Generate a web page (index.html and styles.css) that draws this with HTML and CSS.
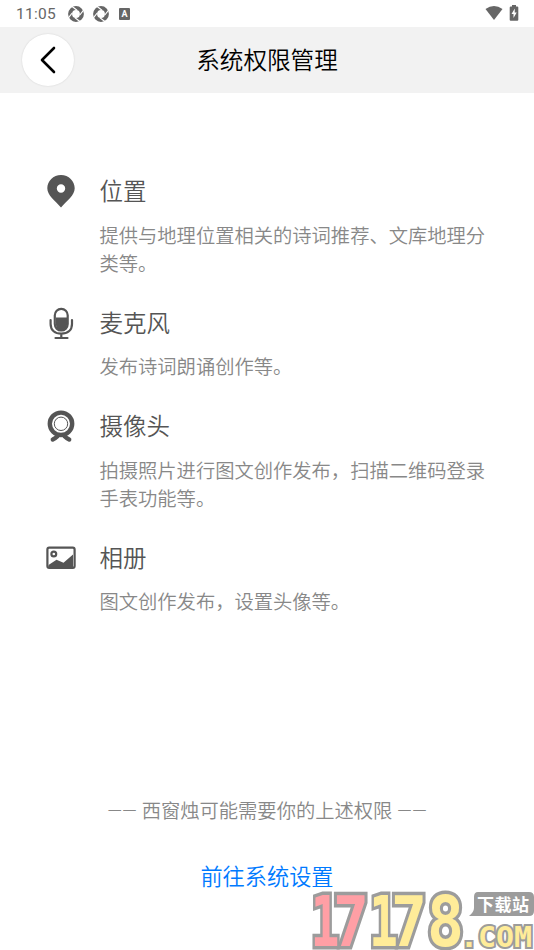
FILE: index.html
```html
<!DOCTYPE html>
<html lang="zh-CN">
<head>
<meta charset="utf-8">
<title>系统权限管理</title>
<link rel="stylesheet" href="styles.css">
</head>
<body>
<div class="screen">
  <div class="status">
    <span class="time">11:05</span>
    <svg class="swirl" viewBox="0 0 16 16"><circle cx="8" cy="8" r="5.9"/><path d="M3.500 0L9 4.200M16 3.500L11.800 9M12.500 16L7 11.800M0 12.500L4.200 7"/></svg>
    <svg class="swirl" viewBox="0 0 16 16"><circle cx="8" cy="8" r="5.9"/><path d="M3.500 0L9 4.200M16 3.500L11.800 9M12.500 16L7 11.800M0 12.500L4.200 7"/></svg>
    <span class="badge-a">A</span>
    <svg class="wifi" viewBox="0 0 18 14"><path d="M0.5 3Q9-3 17.5 3L9 14Z"/></svg>
    <svg class="battery" viewBox="0 0 10 16"><path d="M3 0h4v1.6h1.3q1 0 1 1v12.2q0 1-1 1H1.7q-1 0-1-1V2.600q0-1 1-1H3z"/><path class="bolt" d="M5.800 3.500L2.500 9h2v4L7.700 7.500h-2z"/></svg>
  </div>
  <header class="header">
    <button class="back" aria-label="返回"><svg viewBox="0 0 16 28"><path d="M14 2L2 14L14 26"/></svg></button>
    <h1 class="title">系统权限管理</h1>
  </header>
  <main class="list">
    <section class="item">
      <svg class="icon" viewBox="0 0 30 34"><path class="fill" fill-rule="evenodd" d="M15 0C7.300 0 1.300 6 1.300 13.300C1.300 20.500 9 25.500 15 32.500C21 25.500 28.700 20.500 28.700 13.300C28.700 6 22.700 0 15 0ZM15 9.300a4.200 4.200 0 1 1 0 8.400a4.200 4.200 0 1 1 0-8.400Z"/></svg>
      <div class="body"><h2>位置</h2><p>提供与地理位置相关的诗词推荐、文库地理分类等。</p></div>
    </section>
    <section class="item">
      <svg class="icon" viewBox="0 0 30 34"><path class="fill" d="M10 10.500h11v7.500a5.500 5.500 0 0 1-11 0z"/><rect class="line" x="8.800" y="1.900" width="12.900" height="21.600" rx="6.400"/><path class="line" d="M4.600 13v4c0 6.300 4.500 9.700 10.700 9.700s10.700-3.400 10.700-9.700v-4M15.300 27v4M9.500 31h12"/></svg>
      <div class="body"><h2>麦克风</h2><p>发布诗词朗诵创作等。</p></div>
    </section>
    <section class="item">
      <svg class="icon" viewBox="0 0 30 34"><circle class="ring" cx="15" cy="13.800" r="11.200"/><circle class="thin" cx="15" cy="13.800" r="6.700"/><path class="feet" d="M11.500 26.300Q9.500 28.300 6.800 29.500M18.500 26.300Q20.500 28.300 23.200 29.500"/></svg>
      <div class="body"><h2>摄像头</h2><p>拍摄照片进行图文创作发布，扫描二维码登录手表功能等。</p></div>
    </section>
    <section class="item">
      <svg class="icon" viewBox="0 0 30 34"><rect class="line" x="1.400" y="5.600" width="27.200" height="20.300" rx="1.800"/><circle class="line" cx="7.800" cy="12" r="2.400"/><path class="fill" d="M2.500 25V23L10.500 17.800L17.500 20.800L27 12.500V25Z"/></svg>
      <div class="body"><h2>相册</h2><p>图文创作发布，设置头像等。</p></div>
    </section>
  </main>
  <footer class="footer">
    <p class="note">—— 西窗烛可能需要你的上述权限 ——</p>
    <a class="link">前往系统设置</a>
  </footer>
  <svg class="mark" viewBox="0 0 234 70">
    <g class="digits">
      <text class="red" x="10.500" y="65.500" textLength="29" lengthAdjust="spacingAndGlyphs">1</text>
      <text class="red" x="33" y="65.500" textLength="36" lengthAdjust="spacingAndGlyphs">7</text>
      <text class="yellow" x="69" y="65.500" textLength="29" lengthAdjust="spacingAndGlyphs">1</text>
      <text class="yellow" x="91" y="65.500" textLength="36" lengthAdjust="spacingAndGlyphs">7</text>
      <text class="yellow" x="127" y="65.500" textLength="37" lengthAdjust="spacingAndGlyphs">8</text>
    </g>
    <path class="bubble" d="M178 12h51q5 0 5 5v14q0 5-5 5h-60q5-4 5-8V17q0-5 4-5z"/>
    <text class="site" x="177" y="30.500" textLength="52">下载站</text>
    <text class="com" x="160" y="67" textLength="72" lengthAdjust="spacingAndGlyphs">.COM</text>
  </svg>
</div>
</body>
</html>
```

FILE: styles.css
```css
* { box-sizing: border-box; margin: 0; padding: 0; }
body { background: #fff; font-family: Roboto, "Noto Sans CJK SC", sans-serif; overflow: hidden; }
.screen { position: relative; width: 534px; height: 950px; display: flex; flex-direction: column; overflow: hidden; }
.status { height: 27px; flex: none; display: flex; align-items: center; padding: 0 15px 0 16px; color: #666; }
.time { width: 52px; font-size: 15.500px; letter-spacing: .3px; padding-top: 1px; }
.swirl { width: 16px; height: 16px; margin-right: 9px; }
.swirl circle { fill: none; stroke: #666; stroke-width: 4; }
.swirl path { stroke: #fff; stroke-width: 1.200; fill: none; }
.badge-a { width: 11px; height: 12px; margin-left: 1px; border-radius: 1px; background: #666; color: #fff; font-size: 9px; font-weight: 700; line-height: 12px; text-align: center; }
.wifi { width: 18px; height: 14px; margin: -2px 6px 0 auto; fill: #666; }
.battery { width: 10px; height: 16px; margin-top: -2px; fill: #666; }
.battery .bolt { fill: #fff; }
.header { height: 66px; flex: none; display: grid; grid-template-columns: 76px 1fr 76px; align-items: center; background: #f2f2f2; }
.back { width: 52px; height: 52px; margin-left: 22px; border: 0; border-radius: 50%; background: #fff; box-shadow: 0 0 2px rgba(0,0,0,.14); display: flex; align-items: center; justify-content: center; }
.back svg { width: 16px; height: 28px; fill: none; stroke: #000; stroke-width: 2.600; stroke-linecap: round; stroke-linejoin: round; }
.title { padding-top: 2px; text-align: center; font-size: 23.600px; line-height: 34px; color: #000; }
.list { padding: 82px 47px 0 46px; display: flex; flex-direction: column; gap: 27.900px; }
.item { display: flex; gap: 23.500px; }
.icon { width: 30px; height: 34px; flex: none; }
.fill { fill: #555; }
.line { fill: none; stroke: #555; stroke-width: 2.200; stroke-linecap: round; }
.ring { fill: none; stroke: #555; stroke-width: 4.400; }
.thin { fill: none; stroke: #555; stroke-width: 1; }
.feet { fill: none; stroke: #555; stroke-width: 4.400; stroke-linecap: round; }
.body { width: 388px; }
.body h2 { font-size: 23.500px; line-height: 35px; color: #555; }
.body p { margin-top: 12.500px; font-size: 19.300px; line-height: 28.100px; color: #888; }
.footer { margin-top: 180.500px; display: flex; flex-direction: column; align-items: center; }
.note { font-size: 19.300px; line-height: 28px; color: #888; white-space: nowrap; }
.link { margin-top: 35px; font-size: 22.200px; line-height: 32px; color: #007aff; }
.title, .body h2, .body p, .note, .link { font-weight: 350; }
.mark { position: absolute; left: 300px; top: 880px; width: 234px; height: 70px; }
.mark text { font-family: "DejaVu Sans Mono", monospace; font-weight: 700; paint-order: stroke; stroke: #9c9c9c; stroke-linejoin: miter; }
.mark .digits text { font-size: 69px; stroke-width: 7px; }
.red { fill: #ff9fa5; }
.yellow, .mark .com { fill: #ffec99; }
.bubble { fill: #9c9c9c; }
.mark .site { font-family: "Noto Sans CJK SC", sans-serif; font-size: 17px; fill: #fff; stroke: none; }
.mark .com { font-size: 29px; stroke-width: 4px; }
```
